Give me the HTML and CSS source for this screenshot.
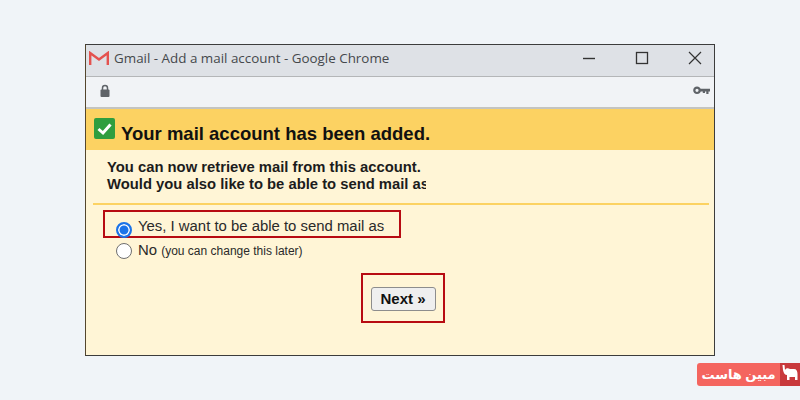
FILE: index.html
```html
<!DOCTYPE html>
<html lang="en">

<head>
    <meta charset="UTF-8">
    <meta name="viewport" content="width=device-width, initial-scale=1.0">
    <title>Gmail - Add a mail account</title>
    <link rel="stylesheet" href="styles.css">
</head>

<body>
    <div class="window">
        <div class="titlebar">
            <svg class="gmail" width="20" height="14" viewBox="0 0 20 14">
                <path d="M1.2 14V2L10 8.5L18.8 2V14" fill="none" stroke="#e4524f" stroke-width="2.4" />
            </svg>
            <span class="title">Gmail - Add a mail account - Google Chrome</span>
            <div class="controls">
                <svg width="14" height="14" viewBox="0 0 14 14"><path d="M1 7.5H13" stroke="#333" stroke-width="1.4" /></svg>
                <svg width="14" height="14" viewBox="0 0 14 14"><rect x="1.5" y="1.5" width="11" height="11" fill="none" stroke="#333" stroke-width="1.3" /></svg>
                <svg width="14" height="14" viewBox="0 0 14 14"><path d="M1 1L13 13M13 1L1 13" stroke="#333" stroke-width="1.2" /></svg>
            </div>
        </div>
        <div class="toolbar">
            <svg width="12" height="14" viewBox="0 0 12 14">
                <path d="M3.5 6V4a2.5 2.5 0 0 1 5 0V6" fill="none" stroke="#5f6368" stroke-width="1.5" />
                <rect x="1.5" y="5.5" width="9" height="7.5" rx="1" fill="#5f6368" />
            </svg>
            <svg width="17" height="9" viewBox="0 0 17 9">
                <circle cx="4" cy="4.3" r="2.7" fill="none" stroke="#5f6368" stroke-width="2.2" />
                <path d="M6 2.8H17V5.4H15.5V8H13.3V5.4H12V7H9.8V5.4H6Z" fill="#5f6368" />
            </svg>
        </div>
        <div class="banner">
            <svg class="check" width="22" height="22" viewBox="0 0 22 22">
                <rect width="21" height="21" rx="2" fill="#2f9e3f" />
                <path d="M4.5 11L9 15L16.5 6.5" fill="none" stroke="#fff" stroke-width="3" />
            </svg>
            <h1>Your mail account has been added.</h1>
        </div>
        <div class="content">
            <p class="intro">You can now retrieve mail from this account.<br>Would you also like to be able to send mail as</p>
            <hr class="rule">
            <div class="options">
                <label class="option picked">
                    <span class="radio on"></span>
                    <span class="option-text">Yes, I want to be able to send mail as</span>
                </label>
                <label class="option">
                    <span class="radio"></span>
                    <span>No <small>(you can change this later)</small></span>
                </label>
            </div>
            <div class="actions">
                <div class="next-box">
                    <button class="next">Next »</button>
                </div>
            </div>
        </div>
    </div>
    <div class="badge">
        <span class="badge-name">مبین هاست</span>
        <span class="badge-logo">
            <svg width="20" height="23" viewBox="0 0 20 23">
                <path d="M2.5 2H4.5L5 7C6 5 8 5 10 6H14C16.5 6 17.5 8 17.5 11V17H15V14H9.5V17H7V12C5 12 3.5 10 3 7Z" fill="#fff" />
            </svg>
        </span>
    </div>
</body>

</html>
```

FILE: styles.css
```css
html,
body {
    margin: 0;
    padding: 0;
}

body {
    width: 800px;
    height: 400px;
    overflow: hidden;
    background-color: #f0f4f8;
    font-family: "Liberation Sans", Arial, sans-serif;
    color: #111;
}

.window {
    box-sizing: border-box;
    width: 630px;
    height: 312px;
    margin: 44px 0 0 85px;
    border: 1px solid #3c3c3c;
    border-left-color: #54462e;
    background-color: #fff5d6;
}

.titlebar {
    display: flex;
    align-items: center;
    box-sizing: border-box;
    height: 32px;
    padding: 0 12px 5px 3px;
    background-color: #dee1e6;
    border-bottom: 1px solid #b4b6b8;
}

.gmail {
    margin-right: 5px;
}

.title {
    font-family: "Open Sans", sans-serif;
    font-size: 13.4px;
    color: #45484c;
}

.controls {
    display: flex;
    align-items: center;
    gap: 39px;
    margin-left: auto;
}

.toolbar {
    display: flex;
    align-items: center;
    justify-content: space-between;
    box-sizing: border-box;
    height: 32px;
    padding: 0 4px 3px 13px;
    background-color: #f1f3f6;
    border-bottom: 2px solid #c4c4c0;
}

.banner {
    display: flex;
    align-items: center;
    box-sizing: border-box;
    height: 41px;
    padding-left: 8px;
    background-color: #fcd262;
}

.check {
    margin: 0 5px 2px 0;
}

h1 {
    margin: 9px 0 0;
    font-size: 18.5px;
    font-weight: bold;
}

.intro {
    box-sizing: border-box;
    margin: 0;
    padding: 9px 0 0 21px;
    width: 340px;
    height: 53px;
    overflow: hidden;
    white-space: nowrap;
    font-size: 14.8px;
    font-weight: bold;
    line-height: 17px;
    color: #1c1c1c;
}

.rule {
    height: 2px;
    margin: 0 5px 0 7px;
    border: 0;
    background-color: #fcd262;
}

.options {
    padding: 5px 0 0 17px;
}

.option {
    display: flex;
    align-items: center;
    box-sizing: border-box;
    width: 298px;
    height: 28px;
    padding: 0 0 0 13px;
    font-size: 14.9px;
    color: #2a2a2a;
}

.option.picked {
    border: 2px solid #b70b12;
    padding-left: 11px;
}

.option + .option {
    height: 24px;
}

.option small {
    font-size: 12px;
}

.option-text {
    margin-top: 4px;
}

.radio {
    box-sizing: border-box;
    flex: none;
    width: 16px;
    height: 16px;
    margin: 2px 6px 0 0;
    border: 1px solid #6f6f6f;
    border-radius: 50%;
    background-color: #fff;
}

.radio.on {
    margin-top: 11px;
    border: 2px solid #1a73e8;
    background-color: #1a73e8;
    box-shadow: inset 0 0 0 1.5px #fff;
}

.actions {
    display: flex;
    justify-content: center;
    padding: 11px 0 0 0;
}

.next-box {
    display: flex;
    align-items: center;
    justify-content: center;
    box-sizing: border-box;
    width: 84px;
    height: 50px;
    border: 2px solid #b70b12;
    margin-right: -6px;
}

.next {
    box-sizing: border-box;
    width: 65px;
    height: 24px;
    margin-top: 1px;
    padding: 0;
    border: 1px solid #8d8d8d;
    border-radius: 3px;
    background-color: #efefef;
    font-family: "Liberation Sans", Arial, sans-serif;
    font-size: 15px;
    font-weight: bold;
    color: #111;
}

.badge {
    display: flex;
    width: 103px;
    height: 23px;
    margin: 7px 0 0 697px;
    overflow: hidden;
    border-radius: 3px 0 0 3px;
    background-color: #f4655f;
}

.badge-name {
    flex: 1;
    text-align: center;
    font-family: "Noto Sans", "DejaVu Sans", sans-serif;
    font-size: 13px;
    font-weight: bold;
    line-height: 22px;
    color: #fff;
}

.badge-logo {
    display: flex;
    width: 20px;
    background-color: #c8393c;
}
```
